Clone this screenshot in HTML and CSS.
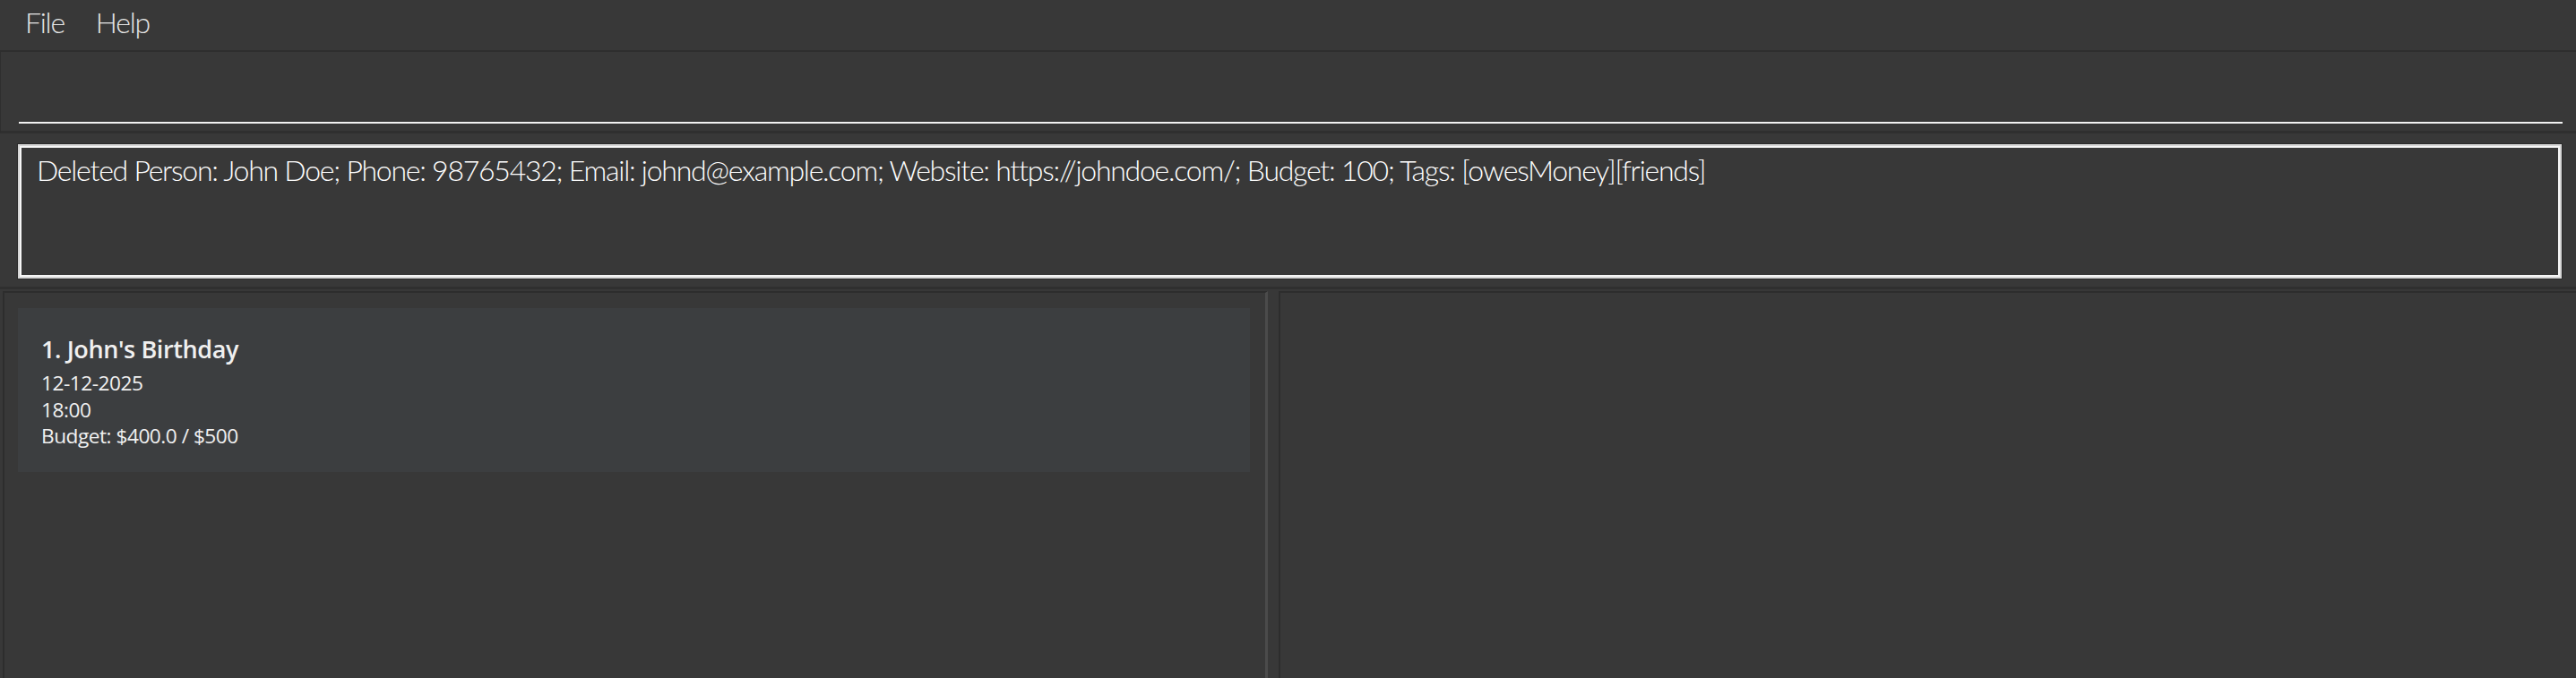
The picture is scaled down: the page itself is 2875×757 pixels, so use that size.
FILE: index.html
```html
<!DOCTYPE html>
<html>
<head>
<meta charset="utf-8">
<link rel="stylesheet" href="styles.css">
</head>
<body>
<div class="app">
  <div class="menubar">
    <span class="menu">File</span>
    <span class="menu">Help</span>
  </div>
  <div class="command-pane">
    <div class="command-field"></div>
  </div>
  <div class="result-pane">
    <div class="result-box">Deleted Person: John Doe; Phone: 98765432; Email: johnd@example.com; Website: https://johndoe.com/; Budget: 100; Tags: [owesMoney][friends]</div>
  </div>
  <div class="split">
    <div class="list-pane">
      <div class="card">
        <div class="card-title">1. John's Birthday</div>
        <div class="card-line">12-12-2025</div>
        <div class="card-line">18:00</div>
        <div class="card-line">Budget: $400.0 / $500</div>
      </div>
    </div>
    <div class="divider"></div>
    <div class="detail-pane"></div>
  </div>
</div>
</body>
</html>
```
FILE: styles.css
```css
html, body {
  margin: 0;
  padding: 0;
  background: #383838;
}

.app {
  display: flex;
  flex-direction: column;
  height: 757px;
  background: #383838;
  font-family: "Open Sans", "Liberation Sans", sans-serif;
  overflow: hidden;
}

.menubar {
  display: flex;
  gap: 35px;
  height: 58px;
  box-sizing: border-box;
  padding: 3px 0 0 28px;
  border-bottom: 2px solid #2e2e2e;
}

.menu {
  font-family: "Lato", "Open Sans", sans-serif;
  font-weight: 300;
  font-size: 32px;
  line-height: 44px;
  letter-spacing: -1.25px;
  color: #e6e6e6;
}

.command-pane {
  height: 91px;
  box-sizing: border-box;
  padding: 0 15px 8px 20px;
  border-left: 1px solid #2e2e2e;
  border-bottom: 3px solid #2f2f2f;
}

.command-field {
  height: 78px;
  border-bottom: 2px solid #f2f2f2;
}

.result-pane {
  height: 174px;
  box-sizing: border-box;
  padding: 12px 16px 0 20px;
  border-bottom: 3px solid #2f2f2f;
}

.result-box {
  height: 150px;
  box-sizing: border-box;
  border: 2px solid #d6d6d6;
  box-shadow: 0 0 0 1px #2a2a2a, inset 0 0 0 2px #f6f6f6;
  padding: 5px 19px 0 19px;
  font-family: "Lato", "Open Sans", sans-serif;
  font-weight: 300;
  font-size: 32px;
  line-height: 44px;
  letter-spacing: -1.25px;
  color: #ffffff;
  white-space: nowrap;
}

.split {
  flex: 1;
  display: flex;
  padding-top: 2px;
  min-height: 0;
}

.list-pane {
  width: 1412px;
  flex-shrink: 0;
  margin-left: 3px;
  box-sizing: border-box;
  border-top: 2px solid #2d2d2d;
  border-left: 2px solid #2d2d2d;
  border-right: 3px solid #4b4b4b;
  padding: 17px 17px 0 15px;
}

.card {
  height: 183px;
  box-sizing: border-box;
  background: #3c3e40;
  padding: 28px 0 0 26px;
  color: #f0f0f0;
}

.card-title {
  font-weight: 600;
  font-size: 27px;
  line-height: 36px;
  letter-spacing: -0.4px;
  margin-bottom: 5px;
}

.card-line {
  font-weight: 400;
  font-size: 22.7px;
  line-height: 29.5px;
  letter-spacing: -0.5px;
}

.divider {
  width: 12px;
  flex-shrink: 0;
}

.detail-pane {
  flex: 1;
  border-top: 2px solid #2d2d2d;
  border-left: 2px solid #2d2d2d;
}
```
